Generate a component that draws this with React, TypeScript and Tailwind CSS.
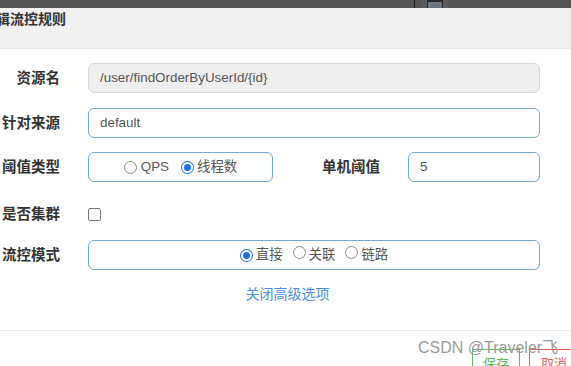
import React from "react";

function Radio({ checked }: { checked?: boolean }) {
  return checked ? (
    <span className="inline-flex w-[13px] h-[13px] rounded-full bg-[#1a73e8] items-center justify-center shrink-0">
      <span className="w-[11px] h-[11px] rounded-full bg-white flex items-center justify-center">
        <span className="w-[7px] h-[7px] rounded-full bg-[#1a73e8]" />
      </span>
    </span>
  ) : (
    <span className="inline-block w-[13px] h-[13px] rounded-full border border-[#8a8a8a] bg-white shrink-0" />
  );
}

function Label({ children, w = "w-[60px]" }: { children: React.ReactNode; w?: string }) {
  return (
    <div className={`${w} shrink-0 text-right text-[14.5px] font-bold text-[#333] pt-[2px]`}>{children}</div>
  );
}

export default function App() {
  return (
    <div
      className="w-[571px] h-[366px] overflow-hidden bg-white relative"
      style={{ fontFamily: '"Liberation Sans", "Noto Sans CJK SC", sans-serif' }}
    >
      <div className="h-[8px] bg-[#545454] flex">
        <div className="w-[414px]" />
        <div className="w-[1px] bg-[#1e1e1e]" />
        <div className="w-[7px]" />
        <div className="w-[26px] bg-[#5b5b5b] flex justify-center">
          <div className="w-[16px] h-[8px] border-t-2 border-x border-[#2a2a2a] bg-[#6a7480]" />
        </div>
      </div>
      <div className="h-[41px] bg-[#f0f0f0] border-b border-[#e5e5e5] pt-[1px]">
        <div className="-ml-[4px] text-[14px] leading-[20px] font-bold text-[#333]">辑流控规则</div>
      </div>

      <div className="pt-[14px] flex flex-col">
        <div className="flex items-center h-[30px] gap-[28px]">
          <Label>资源名</Label>
          <div className="w-[452px] h-[30px] rounded-[6px] border border-[#d9d9d9] bg-[#eeeeee] px-[11px] flex items-center text-[13.4px] text-[#555]">
            /user/findOrderByUserId/{"{id}"}
          </div>
        </div>

        <div className="flex items-center h-[30px] gap-[28px] mt-[15px]">
          <Label>针对来源</Label>
          <div className="w-[452px] h-[30px] rounded-[6px] border border-[#74a8da] bg-white px-[11px] flex items-center text-[13.4px] text-[#555]">
            default
          </div>
        </div>

        <div className="flex items-center h-[30px] mt-[14px]">
          <Label>阈值类型</Label>
          <div className="ml-[28px] w-[185px] h-[30px] rounded-[6px] border border-[#74a8da] bg-white flex items-center justify-center text-[13.4px] text-[#555]">
            <Radio />
            <span className="ml-[4px]">QPS</span>
            <span className="ml-[12px]"><Radio checked /></span>
            <span className="ml-[3px]">线程数</span>
          </div>
          <Label w="w-[107px]">单机阈值</Label>
          <div className="ml-[28px] w-[132px] h-[30px] rounded-[6px] border border-[#74a8da] bg-white px-[11px] flex items-center text-[13.4px] text-[#555]">
            5
          </div>
        </div>

        <div className="flex items-center h-[30px] gap-[28px] mt-[17px]">
          <Label>是否集群</Label>
          <span className="w-[13px] h-[13px] rounded-[2px] border border-[#767676] bg-white mt-[1px]" />
        </div>

        <div className="flex items-center h-[30px] gap-[28px] mt-[11px]">
          <Label>流控模式</Label>
          <div className="w-[452px] h-[30px] rounded-[6px] border border-[#74a8da] bg-white flex items-center justify-center text-[13.4px] text-[#555]">
            <Radio checked />
            <span className="ml-[3px]">直接</span>
            <span className="ml-[10px]"><Radio /></span>
            <span className="ml-[3px]">关联</span>
            <span className="ml-[10px]"><Radio /></span>
            <span className="ml-[3px]">链路</span>
          </div>
        </div>

        <div className="h-[22px] mt-[14px] flex justify-center pl-[4px] text-[14px] text-[#4a90d9]">
          关闭高级选项
        </div>

        <div className="mt-[24px] border-t border-[#ececec] h-[40px] flex justify-end items-start pt-[18px]">
          <div className="w-[48px] h-[30px] border border-[#5cb85c] text-[#5cb85c] text-[13px] flex justify-center pt-[4px]">保存</div>
          <div className="w-[42px] ml-[9px] h-[30px] border border-r-0 border-[#e06060] text-[#e06060] text-[13px] flex justify-start pl-[11px] pt-[4px]">取消</div>
        </div>
      </div>

      <div className="absolute left-[418px] top-[338px] text-[16px] leading-[20px] text-[#999] whitespace-nowrap">
        CSDN @Traveler飞
      </div>
    </div>
  );
}
